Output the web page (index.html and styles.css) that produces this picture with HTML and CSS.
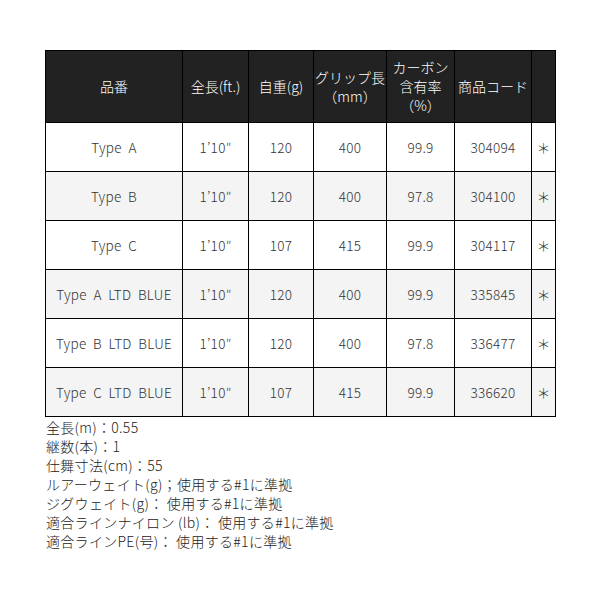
FILE: index.html
```html
<!DOCTYPE html>
<html lang="ja">
<head>
<meta charset="utf-8">
<link rel="stylesheet" href="styles.css">
</head>
<body>
<div class="wrap">
<table class="spec">
<colgroup>
<col class="c1"><col class="c2"><col class="c3"><col class="c4"><col class="c5"><col class="c6"><col class="c7">
</colgroup>
<thead>
<tr>
<th>品番</th>
<th>全長(ft.)</th>
<th>自重(g)</th>
<th>グリップ長<br>（mm）</th>
<th>カーボン<br>含有率<br>（%）</th>
<th>商品コード</th>
<th></th>
</tr>
</thead>
<tbody>
<tr><td>Type&nbsp; A</td><td>1’10″</td><td>120</td><td>400</td><td>99.9</td><td>304094</td><td class="ast">＊</td></tr>
<tr><td>Type&nbsp; B</td><td>1’10″</td><td>120</td><td>400</td><td>97.8</td><td>304100</td><td class="ast">＊</td></tr>
<tr><td>Type&nbsp; C</td><td>1’10″</td><td>107</td><td>415</td><td>99.9</td><td>304117</td><td class="ast">＊</td></tr>
<tr><td>Type&nbsp; A&nbsp; LTD&nbsp; BLUE</td><td>1’10″</td><td>120</td><td>400</td><td>99.9</td><td>335845</td><td class="ast">＊</td></tr>
<tr><td>Type&nbsp; B&nbsp; LTD&nbsp; BLUE</td><td>1’10″</td><td>120</td><td>400</td><td>97.8</td><td>336477</td><td class="ast">＊</td></tr>
<tr><td>Type&nbsp; C&nbsp; LTD&nbsp; BLUE</td><td>1’10″</td><td>107</td><td>415</td><td>99.9</td><td>336620</td><td class="ast">＊</td></tr>
</tbody>
</table>
<div class="notes">
<p>全長(m)：0.55</p>
<p>継数(本)：1</p>
<p>仕舞寸法(cm)：55</p>
<p>ルアーウェイト(g)；使用する#1に準拠</p>
<p>ジグウェイト(g)： 使用する#1に準拠</p>
<p>適合ラインナイロン (lb)： 使用する#1に準拠</p>
<p>適合ラインPE(号)： 使用する#1に準拠</p>
</div>
</div>
</body>
</html>
```
FILE: styles.css
```css
html, body {
  margin: 0;
  padding: 0;
  background: #fff;
}
body {
  font-family: "Noto Sans CJK JP", "Liberation Sans", sans-serif;
  color: #222;
}
.wrap {
  padding: 50px 45px 0 45px;
  width: 510px;
}
.spec {
  width: 510px;
  border-collapse: collapse;
  table-layout: fixed;
  font-size: 13.5px;
}
.c1 { width: 137px; }
.c2 { width: 66px; }
.c3 { width: 65px; }
.c4 { width: 73px; }
.c5 { width: 68px; }
.c6 { width: 77px; }
.c7 { width: 24px; }
.spec th, .spec td {
  border: 1px solid #000;
  text-align: center;
  vertical-align: middle;
  padding: 0;
  font-weight: 300;
}
.spec th {
  background: #222;
  color: #fff;
  height: 71px;
  font-size: 14px;
  line-height: 19px;
}
.spec td {
  height: 48px;
  color: #333;
  line-height: 16px;
  letter-spacing: 0.3px;
}
.spec td.ast {
  font-size: 14px;
  letter-spacing: 0;
}
.spec tbody tr:nth-child(even) td {
  background: #f4f4f4;
}
.notes {
  padding-top: 1px;
  padding-left: 1px;
  font-size: 14px;
  line-height: 19px;
  font-weight: 300;
  letter-spacing: 0.3px;
  color: #222;
}
.notes p {
  margin: 0;
}
```
